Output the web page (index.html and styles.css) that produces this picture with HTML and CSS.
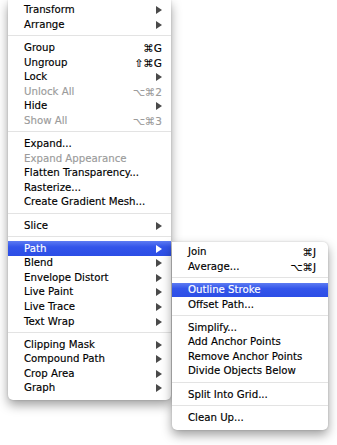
FILE: index.html
```html
<!DOCTYPE html>
<html>
<head>
<meta charset="utf-8">
<link rel="stylesheet" href="styles.css">
</head>
<body>
<div class="stage">
  <div class="menu main">
    <div class="item"><span class="label">Transform</span><span class="arrow"></span></div>
    <div class="item"><span class="label">Arrange</span><span class="arrow"></span></div>
    <div class="sep"></div>
    <div class="item"><span class="label">Group</span><span class="key">⌘G</span></div>
    <div class="item"><span class="label">Ungroup</span><span class="key">⇧⌘G</span></div>
    <div class="item"><span class="label">Lock</span><span class="arrow"></span></div>
    <div class="item disabled"><span class="label">Unlock All</span><span class="key">⌥⌘2</span></div>
    <div class="item"><span class="label">Hide</span><span class="arrow"></span></div>
    <div class="item disabled"><span class="label">Show All</span><span class="key">⌥⌘3</span></div>
    <div class="sep"></div>
    <div class="item"><span class="label">Expand...</span></div>
    <div class="item disabled"><span class="label">Expand Appearance</span></div>
    <div class="item"><span class="label">Flatten Transparency...</span></div>
    <div class="item"><span class="label">Rasterize...</span></div>
    <div class="item"><span class="label">Create Gradient Mesh...</span></div>
    <div class="sep"></div>
    <div class="item"><span class="label">Slice</span><span class="arrow"></span></div>
    <div class="sep"></div>
    <div class="item active"><span class="label">Path</span><span class="arrow"></span></div>
    <div class="item"><span class="label">Blend</span><span class="arrow"></span></div>
    <div class="item"><span class="label">Envelope Distort</span><span class="arrow"></span></div>
    <div class="item"><span class="label">Live Paint</span><span class="arrow"></span></div>
    <div class="item"><span class="label">Live Trace</span><span class="arrow"></span></div>
    <div class="item"><span class="label">Text Wrap</span><span class="arrow"></span></div>
    <div class="sep"></div>
    <div class="item"><span class="label">Clipping Mask</span><span class="arrow"></span></div>
    <div class="item"><span class="label">Compound Path</span><span class="arrow"></span></div>
    <div class="item"><span class="label">Crop Area</span><span class="arrow"></span></div>
    <div class="item"><span class="label">Graph</span><span class="arrow"></span></div>
  </div>
  <div class="menu sub">
    <div class="item"><span class="label">Join</span><span class="key">⌘J</span></div>
    <div class="item"><span class="label">Average...</span><span class="key">⌥⌘J</span></div>
    <div class="sep"></div>
    <div class="item active"><span class="label">Outline Stroke</span></div>
    <div class="item"><span class="label">Offset Path...</span></div>
    <div class="sep"></div>
    <div class="item"><span class="label">Simplify...</span></div>
    <div class="item"><span class="label">Add Anchor Points</span></div>
    <div class="item"><span class="label">Remove Anchor Points</span></div>
    <div class="item"><span class="label">Divide Objects Below</span></div>
    <div class="sep"></div>
    <div class="item"><span class="label">Split Into Grid...</span></div>
    <div class="sep"></div>
    <div class="item"><span class="label">Clean Up...</span></div>
  </div>
</div>
</body>
</html>
```

FILE: styles.css
```css
html, body {
  margin: 0;
  padding: 0;
  background: #ffffff;
}
body {
  width: 337px;
  height: 445px;
  overflow: hidden;
  font-family: "DejaVu Sans", Verdana, sans-serif;
  font-size: 10.2px;
  color: #000;
  -webkit-text-stroke: 0.15px currentColor;
}
.stage {
  position: relative;
  width: 337px;
  height: 445px;
}
.menu {
  background: #fff;
  display: flex;
  flex-direction: column;
  box-shadow: 0 5px 11px rgba(0, 0, 0, 0.38), 0 0 2px rgba(0, 0, 0, 0.18);
}
.main {
  margin-left: 8px;
  width: 163px;
  padding: 3px 0 4px;
  border-radius: 0 0 5px 5px;
}
.sub {
  position: absolute;
  left: 172px;
  top: 242px;
  width: 156px;
  padding: 3px 0 5px;
  border-radius: 0 5px 5px 5px;
}
.item {
  height: 14.6px;
  display: flex;
  align-items: center;
  justify-content: space-between;
  padding: 0 9px 0 16px;
  white-space: nowrap;
}
.main .item { padding-right: 9px; }
.sub .item { padding-right: 12px; }
.label {
  line-height: 14px;
}
.key {
  line-height: 14px;
  font-size: 10.5px;
}
.disabled { color: #9b9b9b; }
.active {
  background: linear-gradient(#5d7bf2, #3355ea 40%, #2c4ee6);
  color: #fff;
}
.arrow {
  width: 0;
  height: 0;
  border-top: 4px solid transparent;
  border-bottom: 4px solid transparent;
  border-left: 6.5px solid #4a4a4a;
}
.active .arrow { border-left-color: #fff; }
.sep {
  height: 1px;
  background: #e3e3e3;
  margin: 3px 0 4.5px;
}
```
